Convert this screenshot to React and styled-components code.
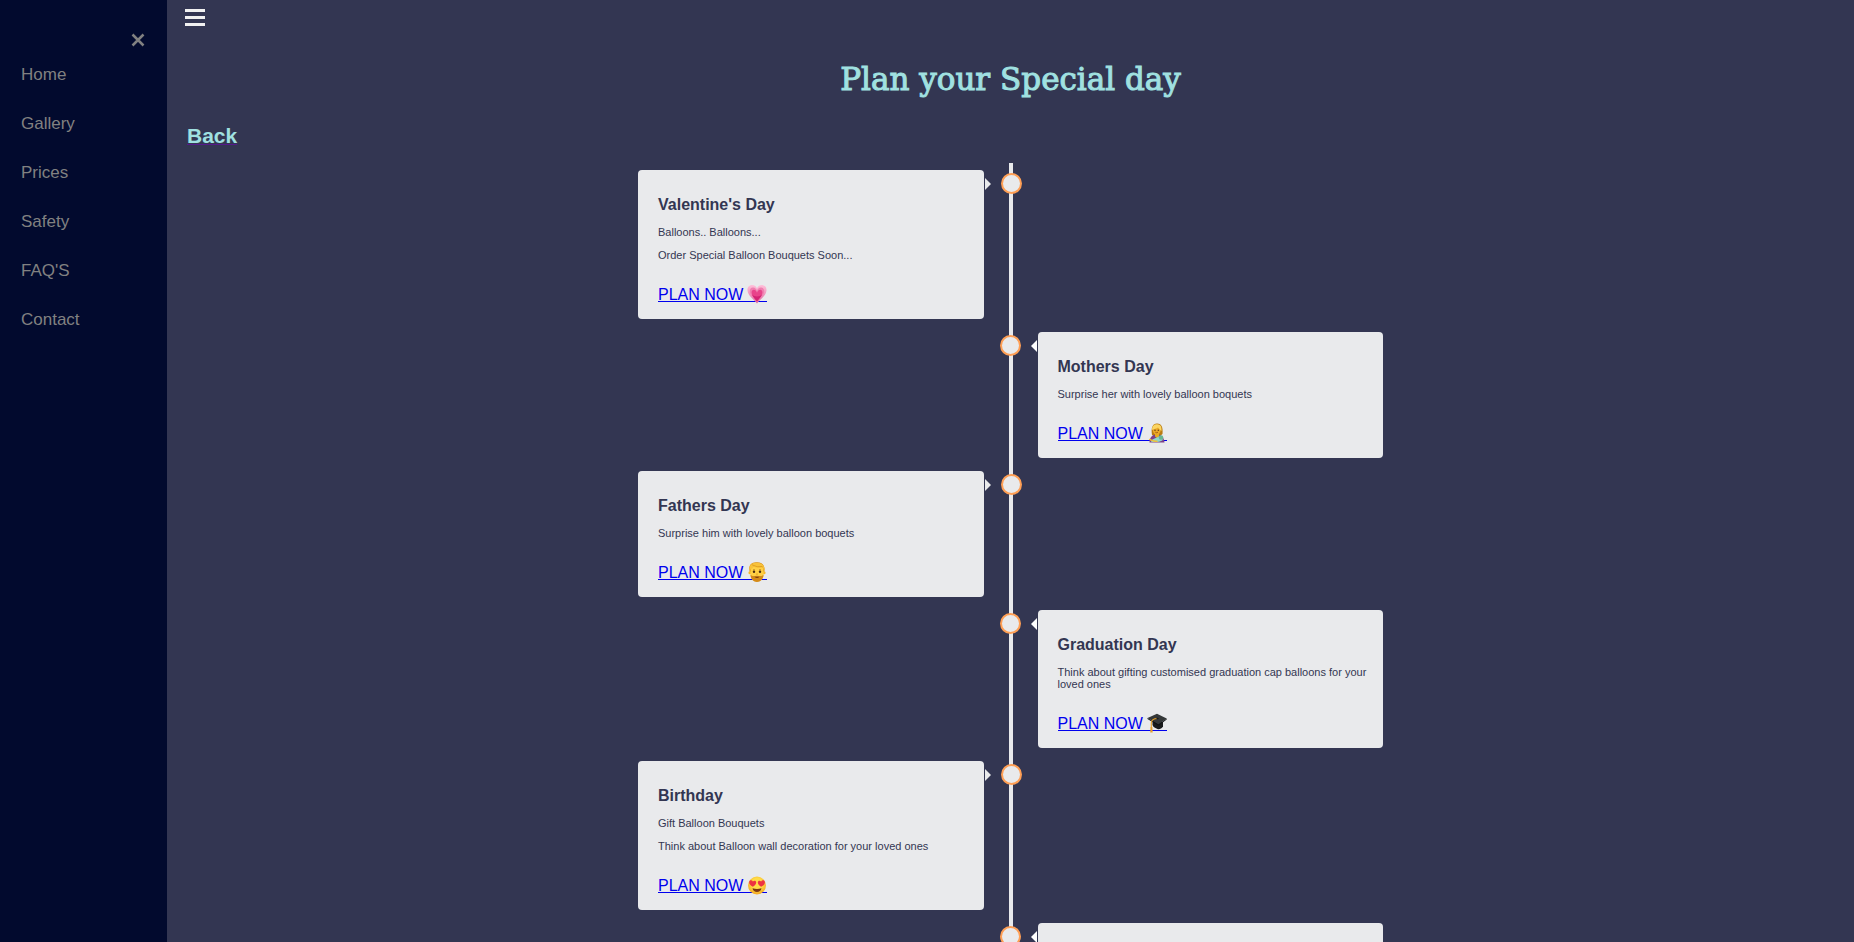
import React from "react";
import styled, { createGlobalStyle } from "styled-components";

const GlobalStyle = createGlobalStyle`
  *, *::before, *::after { box-sizing: border-box; }
  body {
    margin: 0;
    background: #333652;
    font-family: "Liberation Sans", Arial, Helvetica, sans-serif;
  }
`;

const Page = styled.div`
  display: flex;
  height: 100vh;
  overflow: hidden;
  background: #333652;
`;

const Sidebar = styled.nav`
  flex: 0 0 167px;
  display: flex;
  flex-direction: column;
  padding: 28px 17px 28px 21px;
  background: #020a2e;
`;

const CloseButton = styled.button`
  align-self: flex-end;
  display: flex;
  padding: 4px;
  border: 0;
  background: none;
  color: #818181;
  cursor: pointer;
`;

const NavList = styled.ul`
  display: flex;
  flex-direction: column;
  gap: 29px;
  margin: 13px 0 0;
  padding: 0;
  list-style: none;
`;

const NavLink = styled.a`
  display: block;
  color: #818181;
  font-size: 17px;
  line-height: 20px;
  text-decoration: none;
  &:hover { color: #f1f1f1; }
`;

const Main = styled.main`
  flex: 1;
  min-width: 0;
  overflow-y: auto;
  scrollbar-width: none;
`;

const TopBar = styled.header`
  display: flex;
  align-items: flex-start;
  height: 35px;
  padding: 9px 18px;
`;

const MenuButton = styled.button`
  display: flex;
  flex-direction: column;
  gap: 4px;
  width: 20px;
  padding: 0;
  border: 0;
  background: none;
  cursor: pointer;
`;

const Bar = styled.span`
  height: 3px;
  background: #f1f1f1;
`;

const Title = styled.h1`
  margin: 22px 0 23px;
  color: #a0e1e1;
  font-family: "DejaVu Serif", "Liberation Serif", serif;
  font-size: 31px;
  font-weight: 400;
  line-height: 44px;
  text-align: center;
  -webkit-text-stroke: 1px #a0e1e1;
`;

const BackLink = styled.a`
  display: block;
  width: fit-content;
  margin: 0 20px 15px;
  color: #a0e1e1;
  font-size: 21px;
  font-weight: 700;
  line-height: 24px;
  text-decoration: underline #551a8b 1px;
`;

const Timeline = styled.section`
  display: flex;
  flex-direction: column;
  gap: 13px;
  max-width: 745px;
  margin: 0 auto;
  padding: 7px 0;
  background: linear-gradient(#e9eaec, #e9eaec) center / 4px 100% no-repeat;
`;

const Card = styled.article`
  position: relative;
  align-self: ${(p) => (p.$side === "left" ? "flex-start" : "flex-end")};
  width: calc(50% - 27px);
  min-height: 126px;
  padding: 26px 12px 17px 20px;
  border-radius: 4px;
  background: #e9eaec;
  color: #333652;

  &::before {
    content: "";
    position: absolute;
    top: 8px;
    ${(p) => (p.$side === "left" ? "right: -7px" : "left: -7px")};
    border: 6px solid transparent;
    ${(p) =>
      p.$side === "left"
        ? "border-left-color: #e9eaec; border-right-width: 0"
        : "border-right-color: #ffffff; border-left-width: 0"};
  }

  &::after {
    content: "";
    position: absolute;
    top: 3px;
    ${(p) => (p.$side === "left" ? "right: -38px" : "left: -38px")};
    width: 21px;
    height: 21px;
    border: 2px solid #ff9f55;
    border-radius: 50%;
    background: #e9eaec;
  }
`;

const CardTitle = styled.h2`
  margin: 0 0 12px;
  font-size: 16px;
  line-height: 18px;
`;

const CardText = styled.p`
  margin: 0 0 11px;
  font-size: 11px;
  line-height: 12px;
`;

const PlanLink = styled.a`
  display: flex;
  align-items: flex-end;
  gap: 4px;
  width: fit-content;
  height: 17px;
  margin-top: 24px;
  border-bottom: 1px solid #0000ee;
  color: #0000ee;
  font-size: 16px;
  line-height: 12px;
  text-decoration: none;
`;

const Emoji = styled.svg`
  width: 20px;
  height: 20px;
  margin-bottom: -3px;
`;

const HeartArt = () => (
  <Emoji viewBox="0 0 20 20" aria-hidden="true">
    <defs>
      <linearGradient id="heart" x1="0" y1="0" x2="0" y2="1">
        <stop offset="0" stopColor="#ffc0da" />
        <stop offset="1" stopColor="#e06aa0" />
      </linearGradient>
    </defs>
    <path d="M10 19.500C7 15.500 1 12 .5 6.500C.2 3 2.500 1 5.200 1C7.700 1 9.200 2.500 10 4.500C10.800 2.500 12.300 1 14.800 1C17.500 1 19.800 3 19.500 6.500C19 12 13 15.500 10 19.500Z" fill="url(#heart)" />
    <path d="M10 18.500C8 14.500 3 12 2.800 7.500C2.700 5 4 3.500 6 3.500C8 3.500 9.200 5 10 7C10.800 5 12 3.500 14 3.500C16 3.500 17.300 5 17.200 7.500C17 12 12 14.500 10 18.500Z" fill="#f07fb0" />
    <path d="M10 17.800C8.500 14.500 4.700 12 4.600 8.500C4.600 6.700 5.500 5.800 6.800 5.800C8.300 5.800 9.300 7 10 8.800C10.700 7 11.700 5.800 13.200 5.800C14.500 5.800 15.400 6.700 15.400 8.500C15.300 12 11.500 14.500 10 17.800Z" fill="#e8438a" />
    <path d="M10 17.800C8.900 15.500 5.500 13 5 10.500C7 13 13 13 15 10.500C14.500 13 11.100 15.500 10 17.800Z" fill="#d42373" />
  </Emoji>
);

const MotherArt = () => (
  <Emoji viewBox="0 0 20 20" aria-hidden="true">
    <path d="M5 12C3.800 5 5.500.5 10 .5C15 .5 16 5 15.500 11L12 14Z" fill="#b97b12" />
    <path d="M2.500 19.500C2.500 15 5 11.500 9.500 11.500C14 11.500 17 14 17.500 19.500Z" fill="#7d4188" />
    <path d="M8 10H12V13.500L10 15L8 13.500Z" fill="#e7a91f" />
    <ellipse cx="9.700" cy="7" rx="4" ry="4.500" fill="#eba827" />
    <path d="M5 7C5 2 8 1 10.500 1.200C13 1.400 15 3 14.500 8C13 7 12 5.500 11 4.500C9.500 5.800 7 6 5 7Z" fill="#fbd562" />
    <circle cx="8" cy="7.300" r=".7" fill="#563512" />
    <circle cx="11.300" cy="7.300" r=".7" fill="#563512" />
    <path d="M8.300 9.200Q9.700 10.300 11 9.200" fill="none" stroke="#94510e" strokeWidth=".8" />
    <path d="M4 18.800C4.500 16 8 15.500 11 14C13 12.800 16 14 15.700 16.500C15.300 19 8 19.500 4 18.800Z" fill="#8cd8cb" />
    <circle cx="14" cy="14.500" r="2.300" fill="#69b692" />
    <path d="M2.700 16.500C4.500 17 7 18.800 10 18.200" fill="none" stroke="#f3bd35" strokeWidth="1.500" strokeLinecap="round" />
  </Emoji>
);

const FatherArt = () => (
  <Emoji viewBox="0 0 20 20" aria-hidden="true">
    <path d="M3 11C1 4 3.500.5 9 .3C15.500-.3 19 4 17 11Z" fill="#d98e12" />
    <circle cx="2.900" cy="10.800" r="1.500" fill="#f7b928" />
    <circle cx="17.100" cy="10.800" r="1.500" fill="#f7b928" />
    <path d="M3.500 7C3.500 3 16.500 3 16.500 7V13C16.500 17 13 19.500 10 19.500C7 19.500 3.500 17 3.500 13Z" fill="#ffd044" />
    <path d="M3.500 12.500C5.500 15 7 13.700 10 13.700C13 13.700 14.500 15 16.500 12.500C16.500 17 13.500 20 10 20C6.500 20 3.500 17 3.500 12.500Z" fill="#d48a1a" />
    <path d="M2.500 8C1.800 3 5 .7 10 .8C15 1 18 3.500 17.500 8.500C16.500 8 16.500 6 15.500 5.300C12.500 6.500 9 6 6.500 4.500C5.500 7 3.500 6.500 2.500 8Z" fill="#f8c23a" />
    <path d="M5 2.800Q10 5.700 15.500 4.500" fill="none" stroke="#d9981b" strokeWidth=".8" />
    <circle cx="7" cy="9.800" r="1.200" fill="#4a2d13" />
    <circle cx="13" cy="9.800" r="1.200" fill="#4a2d13" />
    <path d="M6 8Q7 7.400 8 8M12 8Q13 7.400 14 8" fill="none" stroke="#a56815" strokeWidth=".7" />
    <path d="M9.200 12Q10 12.500 10.800 12" fill="none" stroke="#d28b16" strokeWidth=".8" />
    <path d="M7.500 14.800H12.500Q10 17.300 7.500 14.800Z" fill="#7a3b0b" />
  </Emoji>
);

const CapArt = () => (
  <Emoji viewBox="0 0 20 20" aria-hidden="true">
    <path d="M5.500 7L16 9V13.500C14.500 16 12 16.500 10.500 16C8.500 15.300 6 14 5.500 12Z" fill="#191b1c" />
    <path d="M.5 5L10 .7L19.700 5.600L11.500 11.500Z" fill="#343738" />
    <path d="M.5 5L11.500 11.500L19.700 5.600V6.600L11.500 12.700L.5 6Z" fill="#101213" />
    <path d="M10.500 5.500C7 5.500 4.500 7 4.300 10V15" fill="none" stroke="#e6a12a" strokeWidth="1.100" />
    <path d="M3.600 14H5.300L5.700 19.500H3.200Z" fill="#e8a12c" />
    <ellipse cx="10.500" cy="5.500" rx="1.200" ry=".7" fill="#17191a" />
  </Emoji>
);

const HeartEyesArt = () => (
  <Emoji viewBox="0 0 20 20" aria-hidden="true">
    <defs>
      <radialGradient id="face" cx=".5" cy=".4" r=".6">
        <stop offset=".5" stopColor="#ffdc47" />
        <stop offset="1" stopColor="#f3a51f" />
      </radialGradient>
    </defs>
    <circle cx="10" cy="10.500" r="9" fill="url(#face)" />
    <path d="M5.800 11.800C3.500 10.500 1.700 8.800 2.200 6.700C2.700 5 5 4.800 5.900 6.500C7.200 5 9.200 5.600 9.200 7.500C9.200 9.500 7.400 10.800 5.800 11.800Z" fill="#ed3342" />
    <path d="M14.200 11.800C16.500 10.500 18.300 8.800 17.800 6.700C17.300 5 15 4.800 14.100 6.500C12.800 5 10.800 5.600 10.800 7.500C10.800 9.500 12.600 10.800 14.200 11.800Z" fill="#ed3342" />
    <path d="M5.500 13.300Q10 14.600 14.500 13.300C14 16 12.300 17 10 17C7.700 17 6 16 5.500 13.300Z" fill="#7a3610" />
  </Emoji>
);

const navItems = ["Home", "Gallery", "Prices", "Safety", "FAQ'S", "Contact"];

const events = [
  {
    title: "Valentine's Day",
    lines: ["Balloons.. Balloons...", "Order Special Balloon Bouquets Soon..."],
    Art: HeartArt,
  },
  { title: "Mothers Day", lines: ["Surprise her with lovely balloon boquets"], Art: MotherArt },
  { title: "Fathers Day", lines: ["Surprise him with lovely balloon boquets"], Art: FatherArt },
  {
    title: "Graduation Day",
    lines: ["Think about gifting customised graduation cap balloons for your loved ones"],
    Art: CapArt,
  },
  {
    title: "Birthday",
    lines: ["Gift Balloon Bouquets", "Think about Balloon wall decoration for your loved ones"],
    Art: HeartEyesArt,
  },
];

const sideOf = (index) => (index % 2 === 0 ? "left" : "right");

export default function App() {
  return (
    <>
      <GlobalStyle />
      <Page>
        <Sidebar aria-label="Main">
          <CloseButton type="button" aria-label="Close menu">
            <svg width="16" height="16" viewBox="0 0 16 16" aria-hidden="true">
              <path d="M2.500 2.500L13.500 13.500M13.500 2.500L2.500 13.500" stroke="currentColor" strokeWidth="2.500" />
            </svg>
          </CloseButton>
          <NavList>
            {navItems.map((item) => (
              <li key={item}>
                <NavLink href="#">{item}</NavLink>
              </li>
            ))}
          </NavList>
        </Sidebar>
        <Main>
          <TopBar>
            <MenuButton type="button" aria-label="Open menu">
              <Bar />
              <Bar />
              <Bar />
            </MenuButton>
          </TopBar>
          <Title>Plan your Special day</Title>
          <BackLink href="#">Back</BackLink>
          <Timeline>
            {events.map(({ title, lines, Art }, index) => (
              <Card key={title} $side={sideOf(index)}>
                <CardTitle>{title}</CardTitle>
                {lines.map((line) => (
                  <CardText key={line}>{line}</CardText>
                ))}
                <PlanLink href="#">
                  PLAN NOW
                  <Art />
                </PlanLink>
              </Card>
            ))}
            <Card $side={sideOf(events.length)} />
          </Timeline>
        </Main>
      </Page>
    </>
  );
}
